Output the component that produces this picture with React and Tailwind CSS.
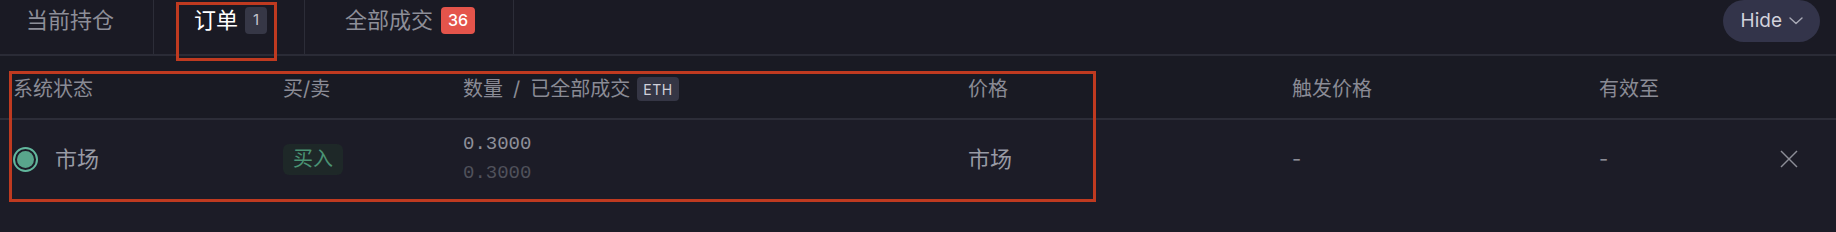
export default function App() {
  return (
    <div className="relative w-[1836px] h-[232px] overflow-hidden bg-[#1a1a24] font-[Inter,'Noto_Sans_CJK_SC',sans-serif]">
      {/* Tab bar */}
      <div className="flex h-[56px] border-b-2 border-[#2a2b36]">
        <div className="flex items-center h-[54px] pb-[14px] pl-[26px] pr-[39px] border-r border-[#2c2d38]">
          <span className="text-[22px] leading-[30px] text-[#8d8e98]">当前持仓</span>
        </div>
        <div className="flex items-center h-[54px] pb-[14px] pl-[40px] pr-[37px] border-r border-[#2c2d38] gap-[7px]">
          <span className="text-[22px] leading-[30px] text-white">订单</span>
          <span className="flex items-center justify-center w-[22px] h-[27px] rounded-[4px] bg-[#363746] text-[15px] text-[#c4c5cd]">1</span>
        </div>
        <div className="flex items-center h-[54px] pb-[14px] pl-[40px] pr-[38px] border-r border-[#2c2d38] gap-[8px]">
          <span className="text-[22px] leading-[30px] text-[#8d8e98]">全部成交</span>
          <span className="flex items-center justify-center w-[34px] h-[27px] rounded-[4px] bg-[#e4544b] text-[16px] font-medium text-white">36</span>
        </div>
        <div className="ml-auto mr-[16px] self-start flex items-center h-[42px] pl-[18px] pr-[17px] gap-[7px] rounded-full bg-[#33344a]">
          <span className="text-[19px] text-[#d2d2dc]">Hide</span>
          <svg width="14" height="8" viewBox="0 0 14 8" fill="none">
            <polyline points="1,1 7,6.5 13,1" stroke="#a9aab6" strokeWidth="1.4" strokeLinecap="round" strokeLinejoin="round" />
          </svg>
        </div>
      </div>

      {/* Header row */}
      <div className="grid grid-cols-[270px_180px_505px_324px_307px_1fr] items-center h-[64px] pt-[4px] pl-[13px] border-b-2 border-[#2c2d38] bg-[#191a23] text-[20px] text-[#8a8b95]">
        <div>系统状态</div>
        <div>买/卖</div>
        <div className="flex items-center">
          <span>数量</span>
          <span className="mx-[10px]">/</span>
          <span>已全部成交</span>
          <span className="ml-[7px] flex items-center h-[24px] px-[6px] rounded-[4px] bg-[#353645] text-[14px] tracking-[0.5px] text-[#d0d0da]">ETH</span>
        </div>
        <div>价格</div>
        <div>触发价格</div>
        <div>有效至</div>
      </div>

      {/* Data row */}
      <div className="bg-[#1c1c27] h-[112px]">
        <div className="grid grid-cols-[270px_180px_505px_324px_307px_1fr] items-center h-[78px] pl-[13px]">
          <div className="flex items-center gap-[17px]">
            <div className="flex items-center justify-center w-[25px] h-[25px] rounded-full border-2 border-[#62b79d]">
              <div className="w-[17px] h-[17px] rounded-full bg-[#59a68c]" />
            </div>
            <span className="text-[22px] text-[#989aa4]">市场</span>
          </div>
          <div>
            <span className="inline-flex items-center h-[31px] px-[10px] rounded-[6px] bg-[#1e2828] text-[20px] text-[#4a9374]">买入</span>
          </div>
          <div className="flex flex-col font-['Liberation_Mono',monospace] text-[19px] leading-[29px]">
            <span className="text-[#8e8f99]">0.3000</span>
            <span className="text-[#50515b]">0.3000</span>
          </div>
          <div className="text-[22px] text-[#989aa4]">市场</div>
          <div className="text-[20px] text-[#8a8b95]">-</div>
          <div className="flex items-center justify-between pr-[38px]">
            <span className="text-[20px] text-[#8a8b95]">-</span>
            <svg width="18" height="18" viewBox="0 0 18 18" fill="none">
              <line x1="1" y1="1" x2="17" y2="17" stroke="#8c8d97" strokeWidth="1.5" />
              <line x1="17" y1="1" x2="1" y2="17" stroke="#8c8d97" strokeWidth="1.5" />
            </svg>
          </div>
        </div>
      </div>

      {/* Annotation boxes */}
      <div className="absolute left-[176px] top-[2px] w-[101px] h-[59px] border-[3px] border-[#bf3a20] pointer-events-none" />
      <div className="absolute left-[9px] top-[71px] w-[1087px] h-[131px] border-[3px] border-[#bf3a20] pointer-events-none" />
    </div>
  );
}
